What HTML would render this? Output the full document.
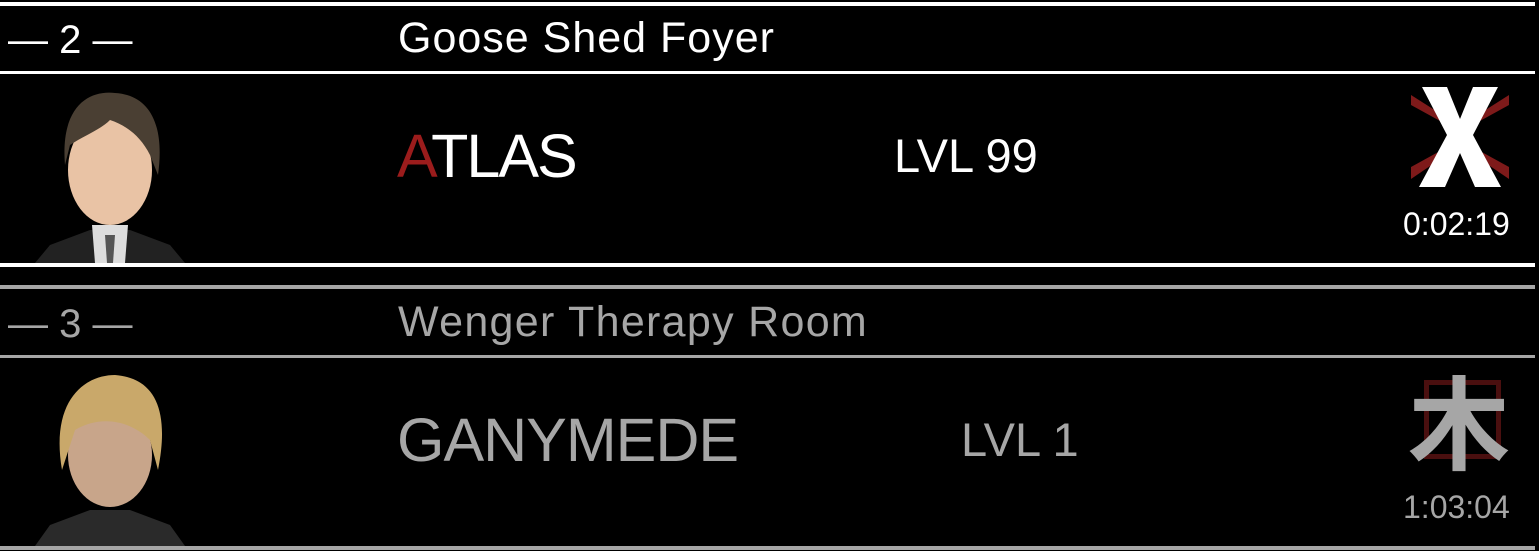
<!DOCTYPE html>
<html><head><meta charset="utf-8"><style>
body{margin:0;width:1539px;height:551px;background:#000;overflow:hidden;position:relative;font-family:"Liberation Sans",sans-serif}
.l{position:absolute;left:0;width:1535px}
.t{position:absolute;white-space:nowrap;line-height:1}
</style></head><body>
<div class="l" style="top:2px;height:4px;background:#fff"></div>
<div class="l" style="top:71px;height:3px;background:#fff"></div>
<div class="l" style="top:263px;height:4px;background:#fff"></div>
<div class="l" style="top:285px;height:4px;background:#a6a6a6"></div>
<div class="l" style="top:355px;height:3px;background:#a6a6a6"></div>
<div class="l" style="top:546px;height:4px;background:#a6a6a6"></div>

<div class="t" style="left:8px;top:20px;font-size:40px;color:#fff">— 2 —</div>
<div class="t" style="left:398px;top:17px;font-size:43px;color:#fff;letter-spacing:1px">Goose Shed Foyer</div>
<div class="t" style="left:397px;top:126px;font-size:61px;color:#fff;letter-spacing:-2px"><span style="color:#9b1c1c">A</span>TLAS</div>
<div class="t" style="left:894px;top:132px;font-size:47px;color:#fff">LVL 99</div>
<svg style="position:absolute;left:1405px;top:85px" width="110" height="105" viewBox="0 0 110 105">
<g fill="#7e1a1a"><polygon points="6,10 50,38 46,42 6,20"/><polygon points="104,10 60,38 64,42 104,20"/><polygon points="6,94 50,64 46,60 6,82"/><polygon points="104,94 60,64 64,60 104,82"/></g>
<polygon fill="#fff" points="17,2 42,2 55,34 68,2 93,2 68,50 96,102 70,102 55,68 40,102 14,102 42,50"/>
</svg>
<div class="t" style="left:1403px;top:208px;font-size:32px;color:#fff">0:02:19</div>

<div class="t" style="left:8px;top:304px;font-size:40px;color:#a6a6a6">— 3 —</div>
<div class="t" style="left:398px;top:301px;font-size:43px;color:#a6a6a6;letter-spacing:1.3px">Wenger Therapy Room</div>
<div class="t" style="left:397px;top:410px;font-size:61px;color:#a6a6a6;letter-spacing:-1px">GANYMEDE</div>
<div class="t" style="left:961px;top:416px;font-size:47px;color:#a6a6a6">LVL 1</div>
<div style="position:absolute;left:1424px;top:380px;width:67px;height:69px;border:5px solid #4a0f0f"></div>
<div class="t" style="left:1408px;top:368px;font-size:102px;font-weight:bold;color:#a6a6a6;font-family:'Noto Sans CJK JP',sans-serif">木</div>
<div class="t" style="left:1403px;top:491px;font-size:32px;color:#a6a6a6">1:03:04</div>

<svg style="position:absolute;left:30px;top:85px" width="160" height="178">
<path d="M5,178 L20,160 L60,145 L100,145 L140,160 L155,178Z" fill="#222"/>
<path d="M62,140 L98,140 L95,178 L65,178Z" fill="#ddd"/>
<path d="M75,150 L85,150 L83,178 L77,178Z" fill="#555"/>
<ellipse cx="80" cy="85" rx="42" ry="55" fill="#e9c3a5"/>
<path d="M35,80 C30,20 60,5 85,8 C120,10 135,40 128,90 L120,70 C110,50 95,40 80,35 C70,45 55,50 40,60Z" fill="#4a3f33"/>
</svg>
<svg style="position:absolute;left:30px;top:370px" width="160" height="176">
<path d="M5,176 L20,155 L60,140 L100,140 L140,155 L155,176Z" fill="#2a2a2a"/>
<ellipse cx="80" cy="85" rx="42" ry="52" fill="#c8a58a"/>
<path d="M32,100 C20,30 55,5 85,5 C125,8 140,40 128,100 L120,70 C100,50 70,45 45,60Z" fill="#c9a86a"/>
</svg>
</body></html>
